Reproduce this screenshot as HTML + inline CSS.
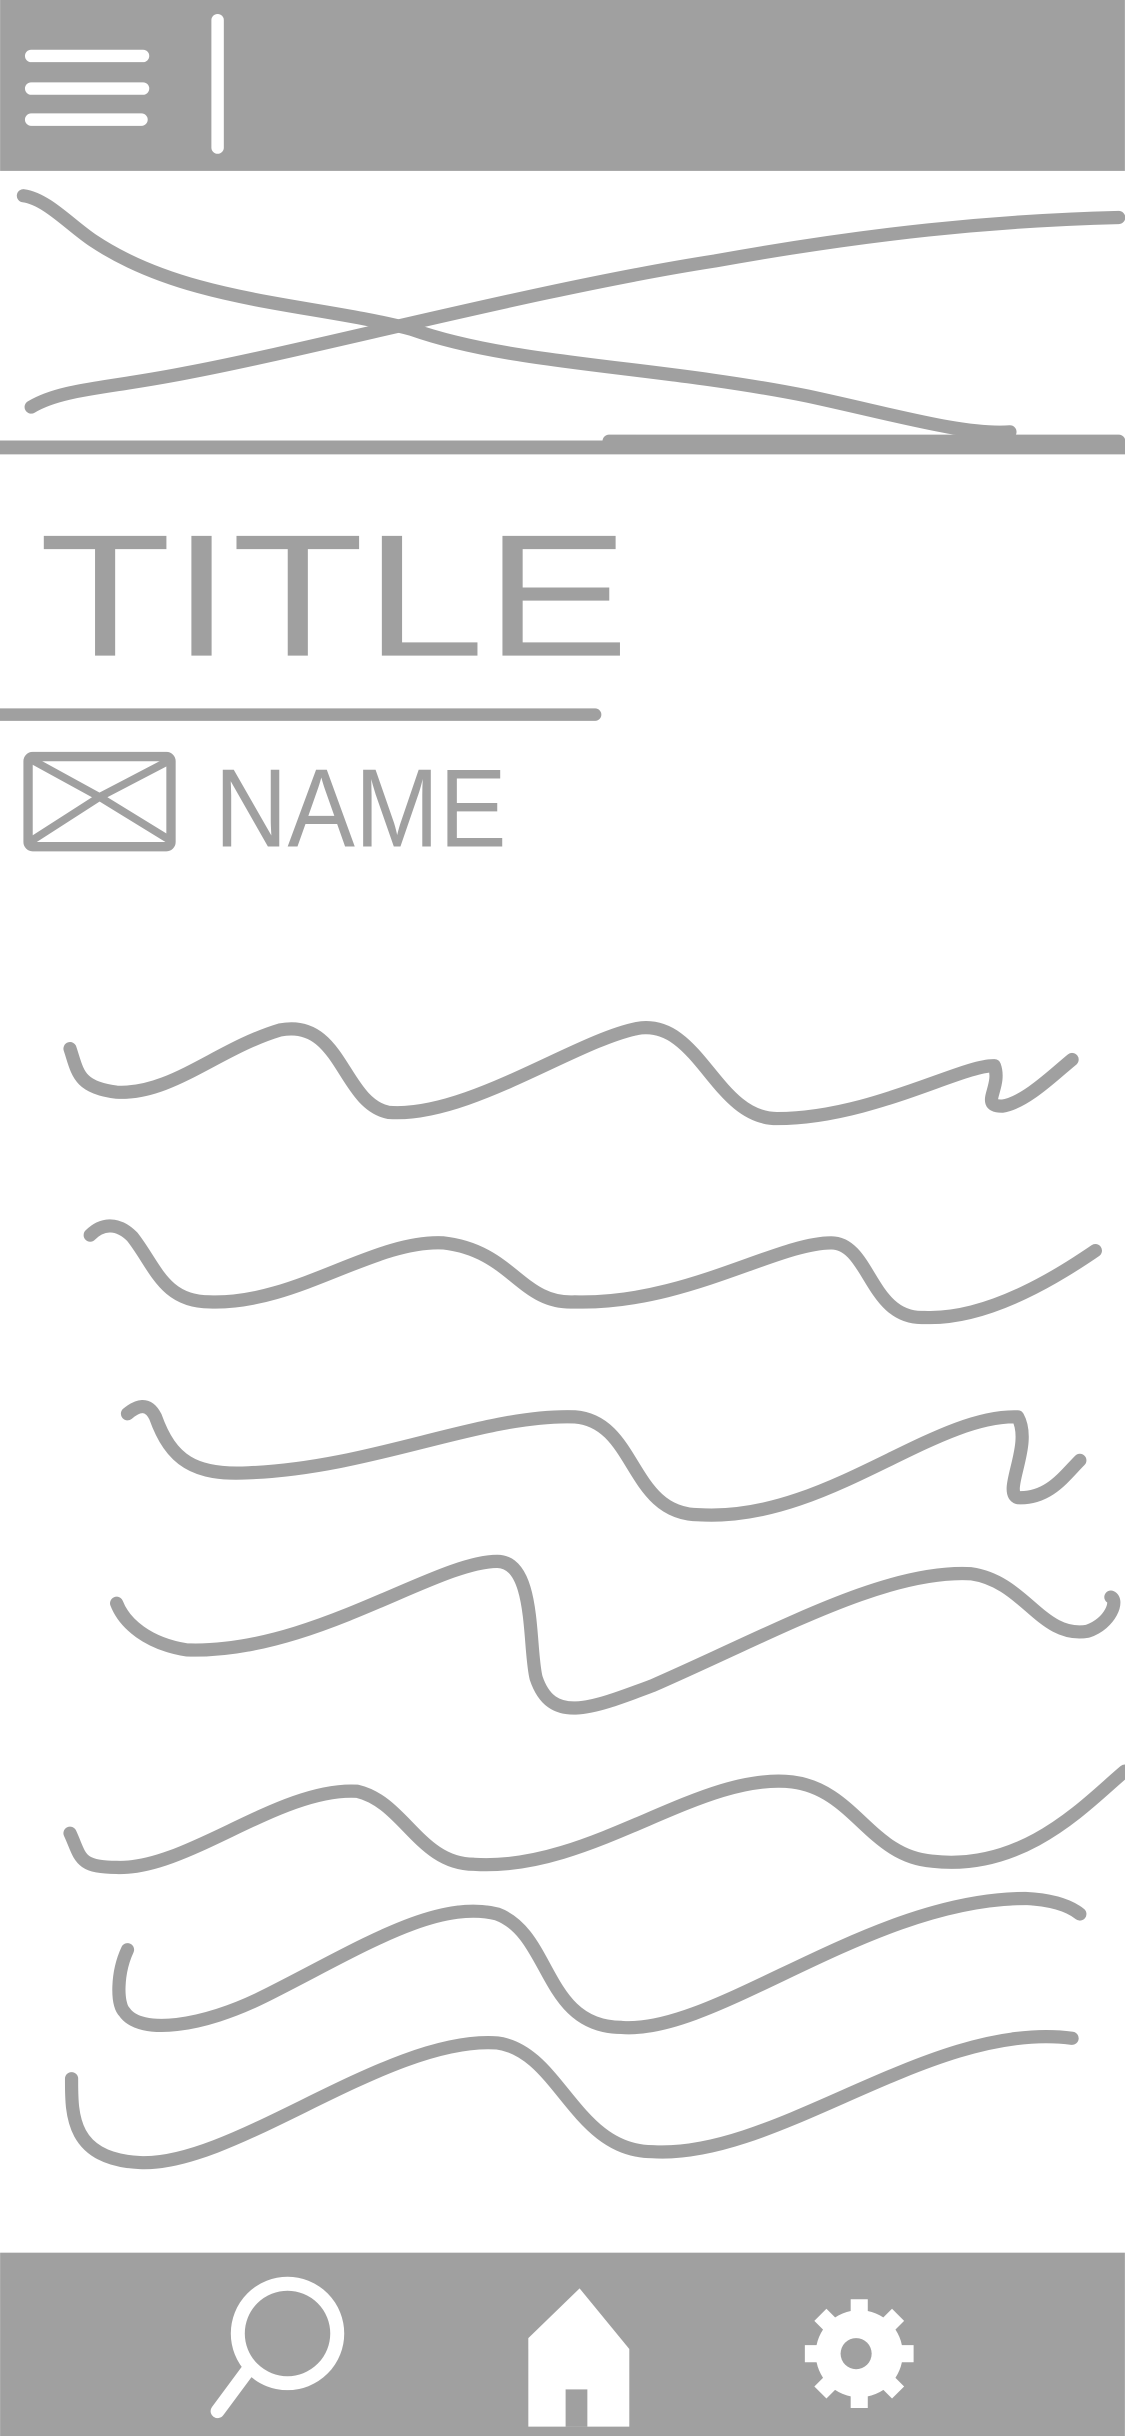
<!DOCTYPE html>
<html><head><meta charset="utf-8"><style>
html,body{margin:0;padding:0;background:#fff;}
svg{display:block;}
</style></head><body>
<svg width="1125" height="2436" viewBox="0 0 724 1568" xmlns="http://www.w3.org/2000/svg">
<rect x="0" y="0" width="724" height="110" fill="#a0a0a0"/>
<g stroke="#fff" stroke-width="8" stroke-linecap="round" fill="none">
<line x1="20" y1="36" x2="92" y2="36"/>
<line x1="20" y1="57" x2="92" y2="57"/>
<line x1="20" y1="77" x2="91" y2="77"/>
<line x1="140" y1="13" x2="140" y2="95"/>
</g>
<g stroke="#a0a0a0" stroke-width="8.5" stroke-linecap="round" stroke-linejoin="round" fill="none">
<path d="M15,126 C30,128 45,145 60,155 C120,195 200,195 265,212 C330,235 420,235 520,255 C580,268 620,280 650,278"/>
<path d="M20,262 C40,250 70,250 120,240 C200,225 350,185 460,168 C560,150 640,142 720,140"/>
<line x1="0" y1="288" x2="724" y2="288" stroke-width="9"/>
<line x1="392" y1="284" x2="720" y2="284"/>
<line x1="0" y1="460" x2="383" y2="460" stroke-width="8"/>
<path d="M45,675 C50,690 50,700 75,703 C110,705 140,675 180,663 C220,655 220,710 250,716 C300,720 370,670 410,662 C450,655 460,720 500,720 C560,720 620,685 640,686 C645,700 630,712 645,712 C660,710 680,690 690,682"/>
<path d="M58,795 C65,788 75,786 85,796 C100,815 105,838 135,838 C190,840 240,798 285,800 C330,805 335,840 370,838 C440,840 500,800 535,800 C560,800 560,850 595,848 C640,850 690,815 705,805"/>
<path d="M82,910 C88,905 95,902 100,912 C110,940 125,950 160,948 C240,945 310,910 370,912 C410,915 405,975 450,975 C530,980 600,910 655,912 C665,930 645,960 655,964 C675,965 685,950 695,940"/>
<path d="M75,1032 C80,1045 95,1058 120,1062 C200,1065 280,1005 320,1005 C345,1005 340,1060 345,1080 C355,1110 380,1100 420,1085 C500,1050 570,1010 625,1013 C660,1018 670,1055 700,1050 C715,1045 720,1030 715,1028"/>
<path d="M45,1180 C52,1195 50,1202 75,1202 C120,1204 180,1150 230,1153 C260,1160 270,1200 305,1200 C380,1205 450,1140 510,1147 C550,1152 560,1195 600,1198 C660,1205 700,1160 724,1140"/>
<path d="M82,1255 C75,1270 75,1290 80,1295 C90,1310 130,1305 170,1285 C230,1255 280,1222 320,1232 C355,1245 350,1305 400,1305 C460,1310 560,1222 660,1222 C680,1223 690,1228 695,1232"/>
<path d="M46,1338 C46,1360 45,1390 90,1392 C150,1395 250,1310 320,1315 C360,1320 370,1385 420,1385 C500,1390 600,1300 690,1312"/>
<rect x="18" y="487" width="92" height="58" rx="3" stroke-width="6"/>
<path d="M22,490 L64,513 L108,490 M22,540 L64,513 L108,540" stroke-width="5"/>
</g>
<text x="25" y="422" font-family="Liberation Sans, sans-serif" font-size="112" fill="#a0a0a0" textLength="380" lengthAdjust="spacingAndGlyphs">TITLE</text>
<text x="138" y="545" font-family="Liberation Sans, sans-serif" font-size="72" fill="#a0a0a0" textLength="188" lengthAdjust="spacingAndGlyphs">NAME</text>
<rect x="0" y="1450" width="724" height="118" fill="#a0a0a0"/>
<g fill="none" stroke="#fff" stroke-width="9" stroke-linecap="round">
<circle cx="185" cy="1502" r="32"/>
<line x1="160" y1="1525" x2="140" y2="1552"/>
</g>
<path d="M340,1562 L340,1505 L373,1473 L405,1512 L405,1562 Z" fill="#fff"/>
<rect x="364" y="1538" width="14" height="24" fill="#a0a0a0"/>
<g fill="#fff">
<circle cx="553" cy="1515" r="28"/>
<g stroke="#fff" stroke-width="11">
<line x1="553" y1="1480" x2="553" y2="1550"/>
<line x1="518" y1="1515" x2="588" y2="1515"/>
<line x1="528" y1="1490" x2="578" y2="1540"/>
<line x1="578" y1="1490" x2="528" y2="1540"/>
</g>
</g>
<circle cx="551" cy="1515" r="10" fill="#a0a0a0"/>
</svg>
</body></html>
